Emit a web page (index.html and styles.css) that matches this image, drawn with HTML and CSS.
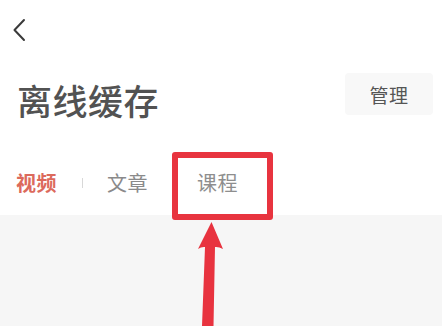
FILE: index.html
```html
<!DOCTYPE html>
<html lang="zh">
<head>
<meta charset="utf-8">
<title>离线缓存</title>
<link rel="stylesheet" href="styles.css">
</head>
<body>
<div class="page">
  <div class="topbar">
    <svg class="back" width="14" height="24" viewBox="0 0 14 24">
      <path d="M12 2 L2.5 12 L12 22" fill="none" stroke="#3a3a3a" stroke-width="2" stroke-linecap="round" stroke-linejoin="round"/>
    </svg>
  </div>
  <div class="title-row">
    <h1 class="title">离线缓存</h1>
    <div class="manage">管理</div>
  </div>
  <div class="tabs">
    <span class="tab active">视频</span>
    <span class="divider"></span>
    <span class="tab">文章</span>
    <span class="tab course">课程</span>
  </div>
  <div class="content"></div>

  <div class="highlight"></div>
  <svg class="pointer" width="40" height="108" viewBox="0 0 40 108">
    <path d="M21.5 4 L33 31 Q28.5 28.5 25 29 L23.5 108 L12 108 L15 29 Q11.5 28.5 8 31 Z" fill="#e8333f"/>
  </svg>
</div>
</body>
</html>
```

FILE: styles.css
```css
* { box-sizing: border-box; margin: 0; padding: 0; }
html, body { width: 442px; height: 326px; overflow: hidden; background: #ffffff; }
body { font-family: "Noto Sans CJK SC", "Noto Sans", sans-serif; }
.page { position: relative; width: 442px; height: 326px; display: flex; flex-direction: column; }
.topbar { height: 64px; padding: 18px 0 0 12px; }
.back { display: block; }
.title-row { display: flex; justify-content: space-between; align-items: flex-start; padding: 0 9px 0 17px; height: 90px; }
.title { font-size: 35px; font-weight: 500; color: #525252; line-height: 46px; margin-top: 13px; letter-spacing: 0.5px; }
.manage { width: 88px; height: 42px; margin-top: 9px; background: #f8f8f8; border-radius: 4px; display: flex; align-items: center; justify-content: center; font-size: 19px; color: #555555; letter-spacing: 0.5px; }
.tabs { display: flex; align-items: center; height: 65px; padding: 0 0 0 16px; margin-top: -4px; }
.tab { font-size: 20px; line-height: 28px; color: #8a8a8a; letter-spacing: 0.5px; }
.tab.active { color: #dc6a5c; font-weight: 700; }
.divider { width: 1px; height: 10px; background: #d8d8d8; margin: 0 24px 0 25px; }
.course { margin-left: 49px; color: #8e8e8e; }
.content { flex: 1; background: #f6f6f6; }
.highlight { position: absolute; left: 172px; top: 152px; width: 101px; height: 68px; border: 6px solid #e8343f; border-radius: 3px; }
.pointer { position: absolute; left: 190px; top: 218px; }
```
